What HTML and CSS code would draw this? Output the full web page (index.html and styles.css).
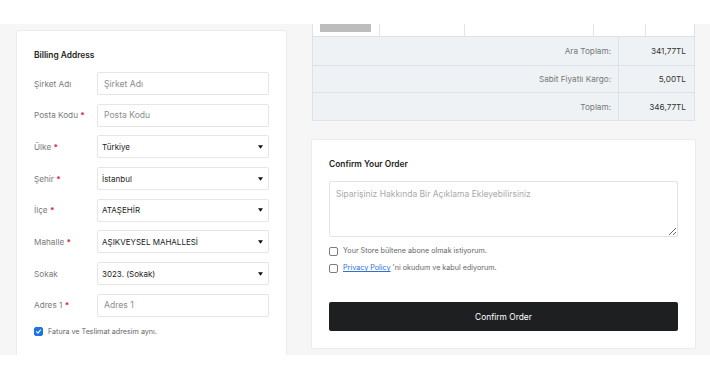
FILE: index.html
```html
<!DOCTYPE html>
<html lang="tr">
<head>
<meta charset="utf-8">
<title>Checkout</title>
<link rel="stylesheet" href="styles.css">
</head>
<body>
<div class="topbar"></div>
<main class="section">
  <div class="col-left">
    <section class="card billing">
      <h2 class="card-title">Billing Address</h2>
      <div class="row"><label class="lbl">Şirket Adı</label><input class="field" placeholder="Şirket Adı"></div>
      <div class="row"><label class="lbl">Posta Kodu <span class="req">*</span></label><input class="field" placeholder="Posta Kodu"></div>
      <div class="row"><label class="lbl">Ülke <span class="req">*</span></label><div class="field select"><span>Türkiye</span><svg class="caret" viewBox="0 0 6 4"><path d="M0 0h6L3 4z"/></svg></div></div>
      <div class="row"><label class="lbl">Şehir <span class="req">*</span></label><div class="field select"><span>İstanbul</span><svg class="caret" viewBox="0 0 6 4"><path d="M0 0h6L3 4z"/></svg></div></div>
      <div class="row"><label class="lbl">İlçe <span class="req">*</span></label><div class="field select"><span>ATAŞEHİR</span><svg class="caret" viewBox="0 0 6 4"><path d="M0 0h6L3 4z"/></svg></div></div>
      <div class="row"><label class="lbl">Mahalle <span class="req">*</span></label><div class="field select"><span>AŞIKVEYSEL MAHALLESİ</span><svg class="caret" viewBox="0 0 6 4"><path d="M0 0h6L3 4z"/></svg></div></div>
      <div class="row"><label class="lbl">Sokak</label><div class="field select"><span>3023. (Sokak)</span><svg class="caret" viewBox="0 0 6 4"><path d="M0 0h6L3 4z"/></svg></div></div>
      <div class="row"><label class="lbl">Adres 1 <span class="req">*</span></label><input class="field" placeholder="Adres 1"></div>
      <div class="check-row same">
        <span class="cb checked"><svg viewBox="0 0 10 10"><path d="M2.2 5.2l2 2 3.8-4.4" fill="none" stroke="#fff" stroke-width="1.5" stroke-linecap="round" stroke-linejoin="round"/></svg></span>
        <span>Fatura ve Teslimat adresim aynı.</span>
      </div>
    </section>
  </div>
  <div class="col-right">
    <div class="cart-row">
      <div class="cell"><span class="thumb"></span></div>
      <div class="cell"></div>
      <div class="cell"></div>
      <div class="cell"></div>
      <div class="cell"></div>
    </div>
    <div class="totals">
      <div class="t-row"><div class="t-label">Ara Toplam:</div><div class="t-val">341,77TL</div></div>
      <div class="t-row"><div class="t-label">Sabit Fiyatlı Kargo:</div><div class="t-val">5,00TL</div></div>
      <div class="t-row"><div class="t-label">Toplam:</div><div class="t-val">346,77TL</div></div>
    </div>
    <section class="card confirm">
      <h2 class="card-title">Confirm Your Order</h2>
      <textarea class="comment" placeholder="Siparişiniz Hakkında Bir Açıklama Ekleyebilirsiniz"></textarea>
      <div class="check-row first"><span class="cb"></span><span>Your Store bültene abone olmak istiyorum.</span></div>
      <div class="check-row second"><span class="cb"></span><span><a href="#" class="link">Privacy Policy</a> 'ni okudum ve kabul ediyorum.</span></div>
      <button class="btn" type="button">Confirm Order</button>
    </section>
  </div>
</main>
</body>
</html>
```

FILE: styles.css
```css
* { box-sizing: border-box; }
body {
  margin: 0;
  background: #fff;
  font-family: Inter, "Liberation Sans", sans-serif;
  color: #222;
}
.topbar { height: 24px; background: #fff; }
.section {
  height: 331px;
  background: #f6f6f6;
  overflow: hidden;
  display: flex;
  align-items: flex-start;
  gap: 24px;
  padding: 0 14px 0 16px;
}
.col-left { width: 271px; flex: none; padding-top: 6px; }
.col-right { width: 385px; flex: none; }
.card {
  background: #fff;
  border: 1px solid #ececec;
  border-radius: 2px;
}
.card-title {
  margin: 0 0 11px;
  font-size: 8.4px;
  line-height: 12px;
  font-weight: 600;
  color: #1d1d1d;
}
.billing { padding: 18px 17px 40px; }
.row {
  display: flex;
  align-items: center;
  margin-bottom: 8.7px;
}
.lbl {
  width: 63px;
  flex: none;
  font-size: 8.2px;
  color: #7a7a7a;
}
.req { color: #d9203a; font-weight: 700; }
.field {
  flex: 1;
  min-width: 0;
  height: 23px;
  border: 1px solid #e6e6e6;
  border-radius: 2px;
  background: #fff;
  padding: 0 6px;
  font-family: inherit;
  font-size: 8.6px;
  color: #222;
  outline: none;
}
.field::placeholder { color: #8e8e8e; }
.select {
  display: flex;
  align-items: center;
  justify-content: space-between;
  padding: 0 5px 0 4px;
  font-size: 8px;
}
.caret { width: 5px; height: 4px; fill: #111; }
.check-row {
  display: flex;
  align-items: center;
  gap: 5px;
  font-size: 7.2px;
  line-height: 12px;
  color: #666;
}
.same { margin-top: 8px; }
.cb {
  width: 9px;
  height: 9px;
  flex: none;
  border: 1px solid #7d7d7d;
  border-radius: 2px;
  background: #fff;
  display: inline-flex;
}
.cb.checked { background: #1a73e8; border-color: #1a73e8; }
.cb svg { width: 100%; height: 100%; }

.cart-row {
  display: grid;
  grid-template-columns: 66px 85px 129px 52px 1fr;
  height: 13px;
  background: #fff;
  border: 1px solid #dee2e6;
  border-top: none;
  margin-left: 1px;
  margin-right: 1px;
}
.cell { border-left: 1px solid #e3e6e9; }
.cell:first-child { border-left: none; padding-left: 7px; }
.thumb { display: block; width: 51px; height: 8px; background: #bdbdbd; }
.totals {
  background: #eff2f4;
  border: 1px solid #dee2e6;
  border-top: none;
  margin: 0 1px;
}
.t-row {
  display: grid;
  grid-template-columns: 306px 1fr;
  height: 27.7px;
  border-top: 1px solid #dee2e6;
  font-size: 8.2px;
}
.t-row:first-child { border-top: none; }
.t-label {
  display: flex;
  align-items: center;
  justify-content: flex-end;
  padding-right: 7px;
  color: #777;
  border-right: 1px solid #dee2e6;
}
.t-val {
  display: flex;
  align-items: center;
  justify-content: flex-end;
  padding-right: 8px;
  color: #333;
}
.confirm {
  margin-top: 18px;
  padding: 18px 17px 17px;
}
.comment {
  display: block;
  width: 100%;
  height: 56px;
  border: 1px solid #e3e3e3;
  border-radius: 2px;
  padding: 7px 6px;
  font-family: inherit;
  font-size: 8.5px;
  color: #222;
  outline: none;
  margin: 0 0 8px;
}
.comment::placeholder { color: #aaa; }
.second { margin-top: 5px; }
.link { color: #2f6fd6; text-decoration: underline; }
.btn {
  display: block;
  width: 100%;
  height: 29px;
  margin-top: 28px;
  border: none;
  border-radius: 2px;
  background: #1e1f21;
  color: #fff;
  font-family: inherit;
  font-size: 8.4px;
  font-weight: 400;
}
```
